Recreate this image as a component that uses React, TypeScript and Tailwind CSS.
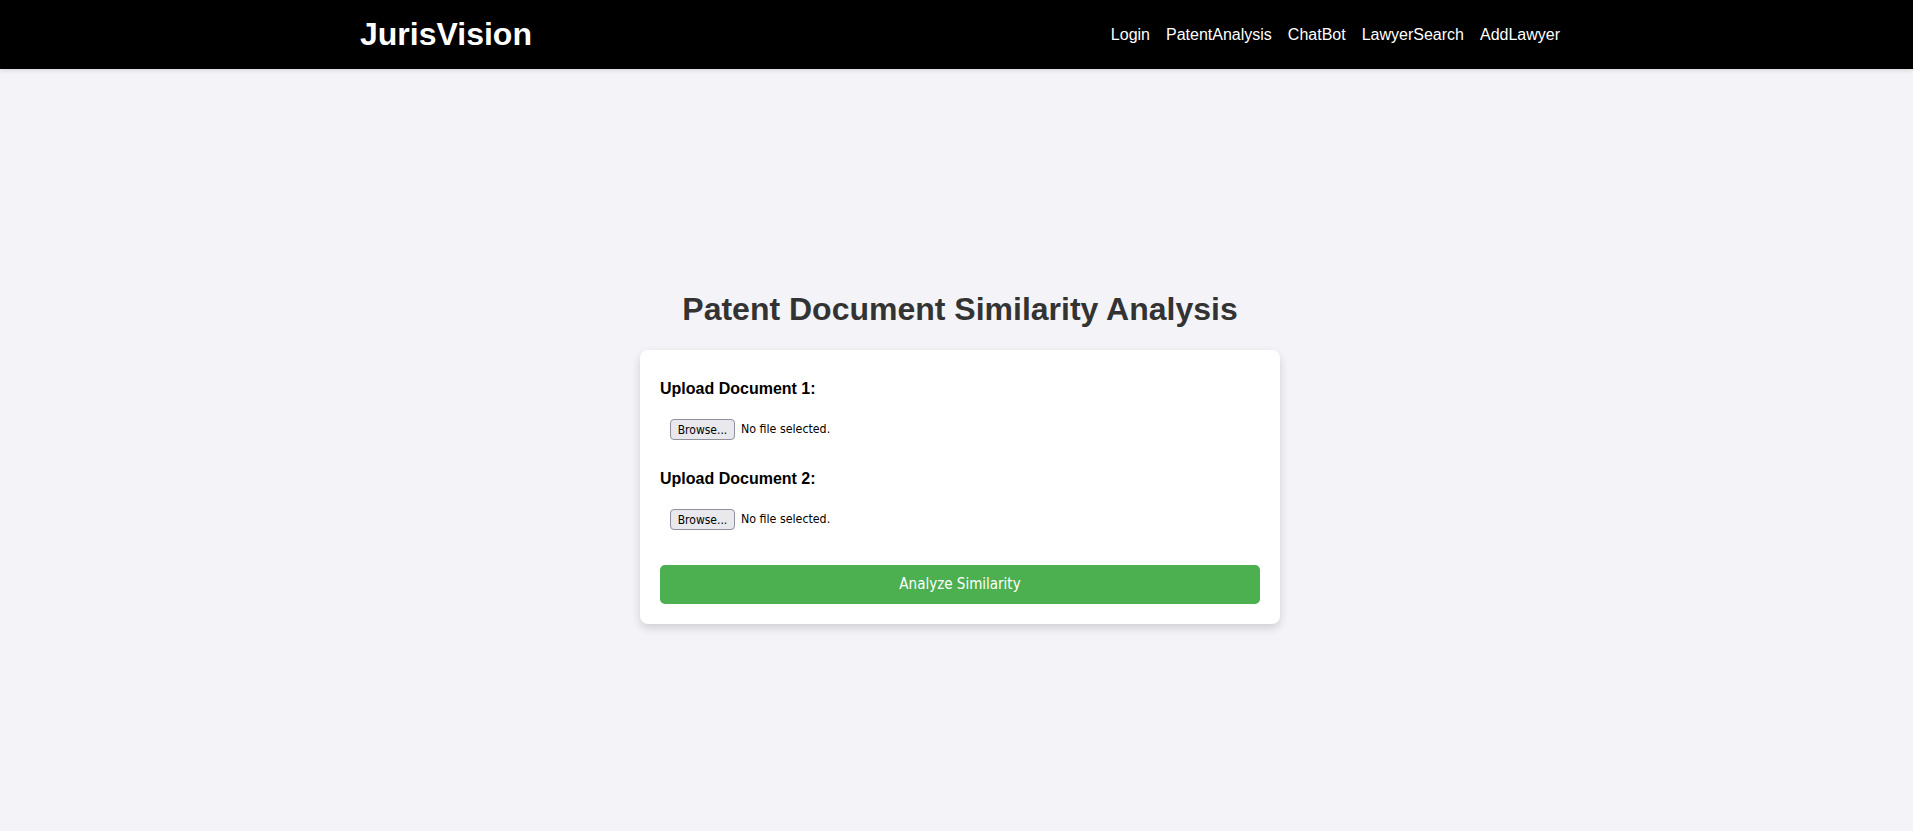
import React from "react";

function FileRow() {
  return (
    <div className="flex items-center h-[21px] ml-[10px]">
      <button
        type="button"
        className="h-[21px] w-[65px] rounded-[4px] border border-[#8f8f9d] bg-[#e9e9ed] text-[12px] text-black leading-none flex items-center justify-center"
        style={{ fontFamily: "'DejaVu Sans Condensed', 'DejaVu Sans', sans-serif" }}
      >
        Browse...
      </button>
      <span
        className="ml-[6px] text-[12.3px] text-black"
        style={{ fontFamily: "'DejaVu Sans Condensed', 'DejaVu Sans', sans-serif" }}
      >
        No file selected.
      </span>
    </div>
  );
}

export default function App() {
  return (
    <div className="min-h-[831px] bg-[#f4f4f8] font-['Liberation_Sans',Arial,sans-serif]">
      <nav className="h-[69px] bg-black shadow-[0_2px_4px_rgba(0,0,0,0.1)] pl-[7px]">
        <div className="mx-auto w-[1200px] h-full flex items-center justify-between">
          <div className="text-[32px] font-bold text-white leading-[37px]">JurisVision</div>
          <div className="flex gap-4 text-[16px] text-white">
            <a>Login</a>
            <a>PatentAnalysis</a>
            <a>ChatBot</a>
            <a>LawyerSearch</a>
            <a>AddLawyer</a>
          </div>
        </div>
      </nav>
      <main className="pl-[7px] pt-[222px] flex flex-col items-center">
        <h2 className="text-[32px] font-bold text-[#333] leading-[37px] mb-[22px]">
          Patent Document Similarity Analysis
        </h2>
        <div className="w-[640px] bg-white rounded-[8px] p-5 shadow-[0_4px_10px_rgba(0,0,0,0.15)]">
          <label className="block mt-[9px] text-[16px] font-bold text-black leading-[20px]">
            Upload Document 1:
          </label>
          <div className="mt-[20px]">
            <FileRow />
          </div>
          <label className="block mt-[29px] text-[16px] font-bold text-black leading-[20px]">
            Upload Document 2:
          </label>
          <div className="mt-[20px]">
            <FileRow />
          </div>
          <button
            type="button"
            className="mt-[35px] w-full h-[39px] rounded-[5px] bg-[#4caf50] text-white text-[15px]"
            style={{ fontFamily: "'DejaVu Sans Condensed', 'DejaVu Sans', sans-serif" }}
          >
            Analyze Similarity
          </button>
        </div>
      </main>
    </div>
  );
}
